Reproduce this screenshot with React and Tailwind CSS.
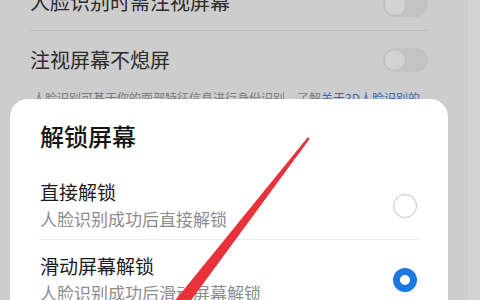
import React from 'react';

const FONT = { fontFamily: '"Noto Sans CJK SC", "Noto Sans", sans-serif' };

function Toggle() {
  return (
    <div className="w-[45px] h-[24px] rounded-full bg-[#c3c3c3] relative">
      <div className="absolute left-[1px] top-[1px] w-[22px] h-[22px] rounded-full bg-[#d2d2d2] border border-[#c0c0c0]" />
    </div>
  );
}

function Radio({ checked }) {
  if (checked) {
    return <div className="w-[24px] h-[24px] rounded-full border-[7px] border-[#1b78e0] bg-white" />;
  }
  return <div className="w-[24px] h-[24px] rounded-full border-[1.5px] border-[#c2c2c2] bg-white" />;
}

function Option({ title, desc, checked }) {
  return (
    <div className="flex items-center justify-between">
      <div className="flex flex-col">
        <span className="text-[19px] leading-[26px] text-[#1a1a1a]">{title}</span>
        <span className="text-[17px] leading-[24px] text-[#8c8c8c] mt-[2px]">{desc}</span>
      </div>
      <div className="mr-[3px] mt-[2px]">
        <Radio checked={checked} />
      </div>
    </div>
  );
}

export default function App() {
  return (
    <div className="w-[480px] h-[300px] relative overflow-hidden bg-[#cdcdcd]" style={FONT}>
      <div className="absolute right-0 top-0 bottom-0 w-[12px] bg-[#d2d2d2]" />
      {/* dimmed settings page behind the sheet */}
      <div className="flex flex-col pl-[30px] pr-[52px]">
        <div className="h-[50px] mt-[-20px] flex items-center justify-between">
          <span className="text-[20px] text-[#2b2b2b] mt-[-6px]">人脸识别时需注视屏幕</span>
          <Toggle />
        </div>
        <div className="border-t border-[#bfbfbf]" />
        <div className="h-[58px] flex items-center justify-between">
          <span className="text-[20px] text-[#2b2b2b]">注视屏幕不熄屏</span>
          <Toggle />
        </div>
        <p className="text-[12px] leading-[18px] text-[#7b7b7b] whitespace-nowrap ml-[3px]">
          人脸识别可基于你的面部特征信息进行身份识别，了解<span className="text-[#2f6cb3]">关于3D人脸识别的</span>
        </p>
      </div>

      {/* bottom sheet */}
      <div className="absolute left-[10px] top-[99px] w-[438px] h-[230px] bg-white rounded-[18px] pl-[30px] pr-[28px] pt-[21px]">
        <div className="text-[24px] leading-[32px] font-medium text-[#151515]">解锁屏幕</div>
        <div className="mt-[27px] pb-[8px] border-b border-[#ececec]">
          <Option title="直接解锁" desc="人脸识别成功后直接解锁" />
        </div>
        <div className="pt-[13px]">
          <Option title="滑动屏幕解锁" desc="人脸识别成功后滑动屏幕解锁" checked />
        </div>
      </div>

      {/* red annotation arrow */}
      <svg className="absolute inset-0 pointer-events-none" width="480" height="300" viewBox="0 0 480 300">
        <polygon points="308,137 309.5,139 189,303 173,303" fill="#e8313a" />
      </svg>
    </div>
  );
}
